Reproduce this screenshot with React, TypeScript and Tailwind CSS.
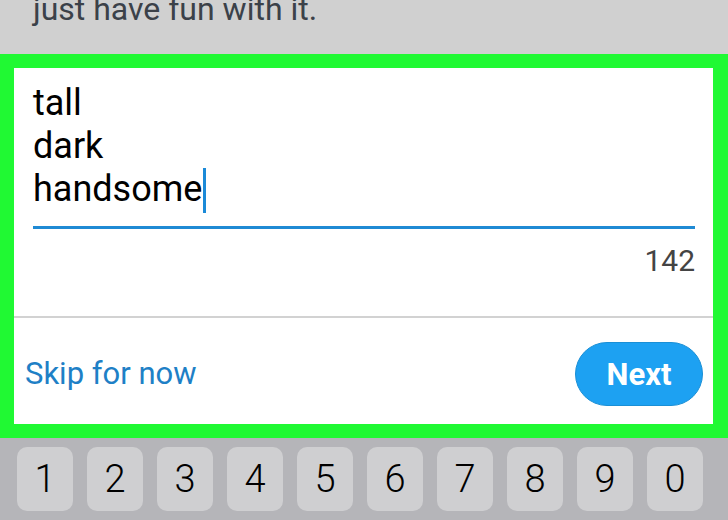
const keys = ["1", "2", "3", "4", "5", "6", "7", "8", "9", "0"];

export default function App() {
  return (
    <div className="w-[728px] h-[520px] overflow-hidden flex flex-col font-['Roboto',sans-serif]">
      {/* prompt text above, cut off by the top edge */}
      <div className="h-[54px] shrink-0 overflow-hidden bg-[#d0d0d0] pl-[33px]">
        <p className="mt-[-6px] text-[32px] leading-[30px] text-[#3b4149]">just have fun with it.</p>
      </div>

      {/* highlighted bio card */}
      <div className="h-[384px] shrink-0 bg-[#20f933] pt-[14px] pl-[14px] pr-[15px] pb-[14px]">
        <div className="h-full bg-white flex flex-col">
          <div className="h-[250px] shrink-0 border-b-2 border-[#d2d2d2] pl-[19px] pr-[18px] pt-[14px]">
            <div className="text-[36px] leading-[43px] text-black">
              <div>tall</div>
              <div>dark</div>
              <div>
                handsome
                <span className="inline-block w-[3px] h-[45px] ml-[1px] bg-[#1b8ad8] align-[-12px]" />
              </div>
            </div>
            <div className="mt-[13px] h-[3px] bg-[#1f8ad4]" />
            <div className="mt-[17px] text-right text-[30px] leading-[30px] text-[#444]">142</div>
          </div>

          <div className="flex-1 flex items-start justify-between pl-[11px] pr-[10px] pt-[24px]">
            <span className="mt-[17px] text-[31px] leading-[30px] text-[#1e80c6]">Skip for now</span>
            <button className="w-[128px] h-[64px] rounded-full bg-[#1da1f2] border border-[#1a8fd6] text-white font-bold text-[31px] leading-none">
              Next
            </button>
          </div>
        </div>
      </div>

      {/* number row of the keyboard */}
      <div className="flex-1 bg-[#b5b5b9] pt-[9px] pl-[17px] flex gap-[14px]">
        {keys.map((k) => (
          <div
            key={k}
            className="w-[56px] h-[64px] rounded-[10px] bg-[#cfcfd1] flex items-center justify-center text-[38px] font-light text-black leading-none"
          >
            {k}
          </div>
        ))}
      </div>
    </div>
  );
}
